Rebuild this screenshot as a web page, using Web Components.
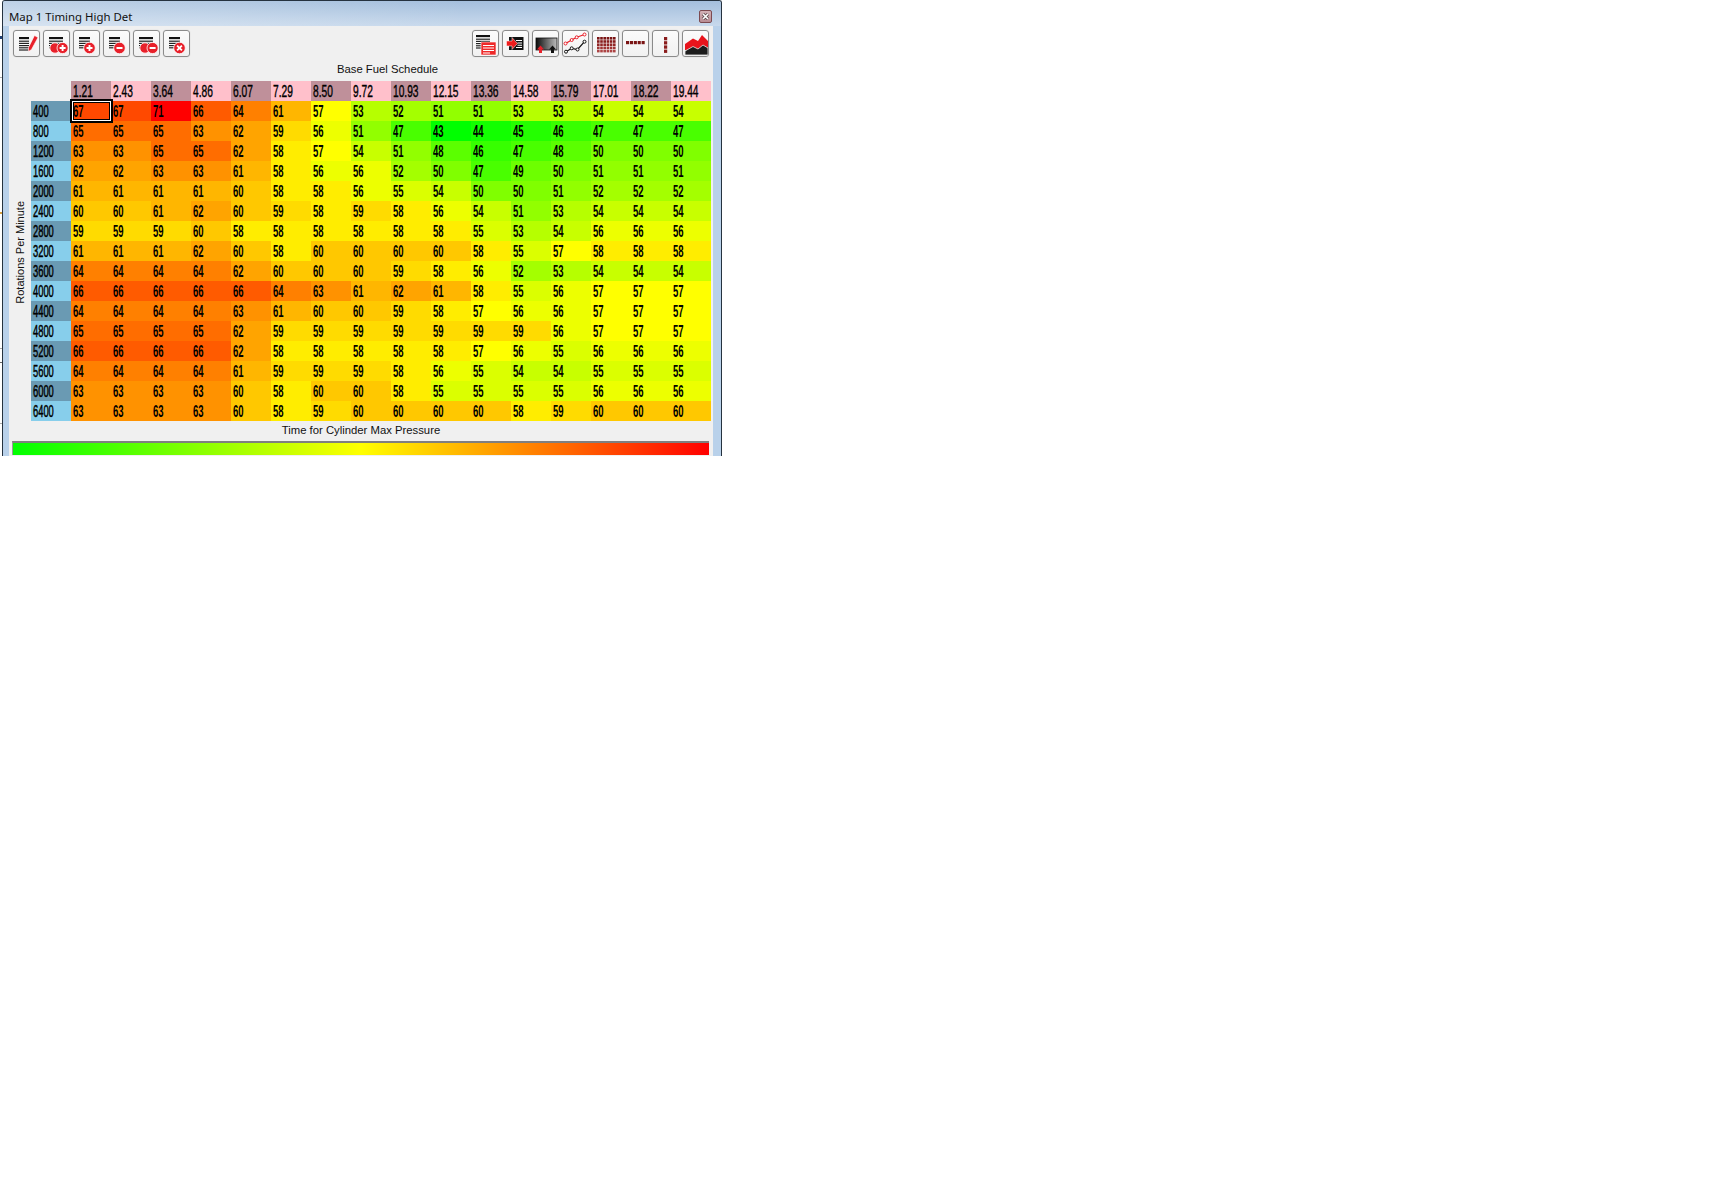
<!DOCTYPE html>
<html lang="en">
<head>
<meta charset="utf-8">
<title>Map 1 Timing High Det</title>
<style>
  html, body { margin: 0; background: #fff; }
  body {
    width: 1730px; height: 1192px; overflow: hidden; display: flex; align-items: flex-start;
    padding-left: 2px; box-sizing: border-box;
    font-family: "Liberation Sans", Arial, sans-serif;
    background:
      linear-gradient(180deg,
        #fff 0 36px, #1f3f74 36px 39px, #fff 39px 77px, #a9a9a9 77px 78px, #fff 78px 212px,
        #d8a040 212px 214px, #fff 214px 348px, #a9a9a9 348px 349px, #fff 349px 362px,
        #666 362px 363px, #fff 363px 423px, #a9a9a9 423px 424px, #fff 424px 456px, #fff 456px) 0 0 / 2px 100% no-repeat,
      #fff;
  }
</style>
</head>
<body>
<map-window>
  <span slot="title">Map 1 Timing High Det</span>
  <tool-bar slot="toolbar">
    <tool-button icon="edit"></tool-button>
    <tool-button icon="addmany"></tool-button>
    <tool-button icon="add"></tool-button>
    <tool-button icon="remove"></tool-button>
    <tool-button icon="removemany"></tool-button>
    <tool-button icon="delete"></tool-button>
    <span slot="right"><tool-button icon="copy"></tool-button></span>
    <span slot="right"><tool-button icon="import"></tool-button></span>
    <span slot="right"><tool-button icon="gradient"></tool-button></span>
    <span slot="right"><tool-button icon="lines"></tool-button></span>
    <span slot="right"><tool-button icon="grid"></tool-button></span>
    <span slot="right"><tool-button icon="row"></tool-button></span>
    <span slot="right"><tool-button icon="col"></tool-button></span>
    <span slot="right"><tool-button icon="area"></tool-button></span>
  </tool-bar>
  <heat-map slot="table" top-label="Base Fuel Schedule" side-label="Rotations Per Minute" bottom-label="Time for Cylinder Max Pressure"></heat-map>
  <scale-bar slot="scale"></scale-bar>
</map-window>

<script>
const doc = (x, y, w, h) => {
  let s = `<rect x="${x}" y="${y}" width="${w}" height="2.4" fill="#111"/>`;
  s += `<rect x="${x}" y="${y+2.4}" width="${w}" height="${h-2.4}" fill="#fff"/>`;
  for (let yy = y + 3.6; yy < y + h; yy += 2.2) s += `<rect x="${x}" y="${yy}" width="${w}" height="1.2" fill="#222"/>`;
  return s;
};
const badge = (cx, cy, r, inner) =>
  `<circle cx="${cx}" cy="${cy}" r="${r}" fill="#e8202a" stroke="#fff" stroke-width="0.8"/>${inner || ''}`;
const plus = (cx, cy) => `<path d="M${cx-3} ${cy}h6M${cx} ${cy-3}v6" stroke="#fff" stroke-width="1.9"/>`;
const minus = (cx, cy) => `<path d="M${cx-3} ${cy}h6" stroke="#fff" stroke-width="2"/>`;
const cross = (cx, cy) => `<path d="M${cx-2.4} ${cy-2.4}l4.8 4.8M${cx+2.4} ${cy-2.4}l-4.8 4.8" stroke="#fff" stroke-width="1.8"/>`;
const dots = (pts, stroke) => pts.map(p => `<circle cx="${p[0]}" cy="${p[1]}" r="1.5" fill="#fff" stroke="${stroke}" stroke-width="1"/>`).join('');
const poly = (pts, stroke) => `<polyline points="${pts.map(p => p.join(',')).join(' ')}" fill="none" stroke="${stroke}" stroke-width="1.2"/>` + dots(pts, stroke);

function gridIcon() {
  let s = '';
  for (let r = 0; r < 5; r++) for (let c = 0; c < 6; c++) {
    const shade = ['#7a1414', '#861a1a', '#922626', '#a03434', '#ad4444'][r];
    s += `<rect x="${4 + c * 3.2}" y="${6 + r * 3.2}" width="2.6" height="2.6" fill="${shade}"/>`;
  }
  return s;
}
const ICONS = {
  edit: doc(5, 6, 10, 13) + `<path d="M20.5 4.5 L24 6.5 L17.5 18.5 L14.5 20.5 L14.500 16.500 Z" fill="#e8202a" stroke="#fff" stroke-width=".6"/>`,
  addmany: doc(5, 6, 14, 12) + badge(11, 17, 5.2) + badge(18.6, 17, 5.6, plus(18.6, 17)),
  add: doc(5, 6, 11, 12) + badge(15.5, 17, 5.8, plus(15.5, 17)),
  remove: doc(5, 6, 11, 12) + badge(15.5, 17, 5.8, minus(15.5, 17)),
  removemany: doc(5, 6, 14, 12) + badge(11, 17, 5.2) + badge(18.6, 17, 5.6, minus(18.6, 17)),
  delete: doc(5, 6, 11, 12) + badge(15.5, 17, 5.8, cross(15.5, 17)),
  copy: doc(3, 4, 14, 14) +
    `<rect x="8" y="11" width="15" height="13" fill="#ee2a2a" stroke="#fff" stroke-width=".6"/>
     <path d="M10 14.5h11M10 17h11M10 19.5h11M10 22h7" stroke="#fff" stroke-width="1"/>`,
  import: `<rect x="6" y="6" width="14.5" height="13" fill="#111"/>
     <path d="M13 9.5h6M14.5 12h4.500M14.500 14.200h4.500M13 16.500h6" stroke="#fff" stroke-width="1.100"/>
     <path d="M3.500 10h5.500V6.500L14.500 12.500L9 18.500V15H3.500Z" fill="#ee1c1c" stroke="#fff" stroke-width=".5"/>`,
  gradient: `<defs><linearGradient id="g" x1="0" y1="0" x2="1" y2="0"><stop offset="0" stop-color="#0c0c0c"/><stop offset="1" stop-color="#bdbdbd"/></linearGradient></defs>
     <rect x="3" y="7" width="21" height="12" fill="url(#g)" stroke="#111" stroke-width=".8"/>
     <path d="M7.500 14.500L11 18.500H9V22H6V18.500H4Z" fill="#e8202a"/>
     <path d="M19.500 14.500L23 18.500H21V22H18V18.500H16Z" fill="#111"/>`,
  lines: poly([[2.5, 12.5], [8.7, 9], [13.7, 6.3], [21.5, 3.5]], '#e8202a') + poly([[3, 20.7], [8.7, 17.3], [14.5, 18.5], [21.5, 10.7]], '#111'),
  grid: gridIcon(),
  row: [0, 1, 2, 3, 4].map(i => `<rect x="${3 + i * 3.9}" y="10" width="3.100" height="3.200" fill="#7a1414"/>`).join(''),
  col: [0, 1, 2, 3].map(i => `<rect x="11" y="${6 + i * 4.2}" width="3.200" height="3.300" fill="#8a1c1c"/>`).join(''),
  area: `<path d="M2 13 L10 7.500 L15 10 L19 4 L25 10 V19 H2Z" fill="#e8141c"/>
     <path d="M2 20 L10 15.500 L15 18 L20 14 L25 17 V24 H2Z" fill="#1c1c1c" stroke="#e8e8e8" stroke-width=".8"/>`
};

class ToolButton extends HTMLElement {
  constructor() {
    super();
    this.attachShadow({ mode: 'open' }).innerHTML = `
      <style>
        :host { display: block; width: 27px; height: 27px; box-sizing: border-box;
                border: 1px solid #8b8b8b; border-radius: 3px;
                background: linear-gradient(#fbfbfb, #f1f1f1); box-shadow: 0 0 0 .5px #e4e4e4; }
        svg { display: block; width: 25px; height: 25px; }
      </style>
      <svg viewBox="0 0 25 25" aria-hidden="true">${ICONS[this.getAttribute('icon')] || ''}</svg>`;
  }
}
customElements.define('tool-button', ToolButton);

class ToolBar extends HTMLElement {
  constructor() {
    super();
    this.attachShadow({ mode: 'open' }).innerHTML = `
      <style>
        :host { display: flex; justify-content: space-between; padding: 4px 4px 0; }
        .g { display: flex; gap: 3px; }
        ::slotted(span) { display: block; }
      </style>
      <div class="g"><slot></slot></div>
      <div class="g"><slot name="right"></slot></div>`;
  }
}
customElements.define('tool-bar', ToolBar);

class MapWindow extends HTMLElement {
  constructor() {
    super();
    this.attachShadow({ mode: 'open' }).innerHTML = `
      <style>
        :host { display: block; width: 720px; height: 456px; box-sizing: border-box; overflow: hidden;
                border: 1px solid #25323f; border-bottom: 0; border-radius: 3px 3px 0 0; background: #b9d1ea; }
        .title { display: flex; align-items: center; justify-content: space-between; box-sizing: border-box;
                 height: 25px; padding: 6px 9px 0 6px;
                 background: linear-gradient(90deg, rgba(255,255,255,.28), rgba(255,255,255,0) 65%),
                             linear-gradient(180deg, #a4bfdd, #c8d9ec);
                 font: 11.4px/19px "Noto Sans", "Open Sans", sans-serif; color: #111; }
        .close { width: 13px; height: 13px; box-sizing: border-box; border: 1px solid #7c4a50; border-radius: 2px;
                 background: linear-gradient(#d2b1b6, #b98d94); display: flex; }
        .close svg { width: 11px; height: 11px; }
        .side { display: flex; padding: 0 7px 0 6px; }
        .body { width: 704px; height: 430px; background: #f0f0f0; display: flex; flex-direction: column; }
      </style>
      <div class="title"><slot name="title"></slot>
        <div class="close"><svg viewBox="0 0 11 11" aria-hidden="true"><path d="M3 3l5 5M8 3l-5 5" stroke="#4a3a3c" stroke-width="3"/><path d="M3 3l5 5M8 3l-5 5" stroke="#fff" stroke-width="1.700"/></svg></div>
      </div>
      <div class="side"><div class="body">
        <slot name="toolbar"></slot>
        <slot name="table"></slot>
        <slot name="scale"></slot>
      </div></div>`;
  }
}
customElements.define('map-window', MapWindow);

const COLS = ['1.21','2.43','3.64','4.86','6.07','7.29','8.50','9.72','10.93','12.15','13.36','14.58','15.79','17.01','18.22','19.44'];
const ROWS = [
 [400, 67,67,71,66,64,61,57,53,52,51,51,53,53,54,54,54],
 [800, 65,65,65,63,62,59,56,51,47,43,44,45,46,47,47,47],
 [1200,63,63,65,65,62,58,57,54,51,48,46,47,48,50,50,50],
 [1600,62,62,63,63,61,58,56,56,52,50,47,49,50,51,51,51],
 [2000,61,61,61,61,60,58,58,56,55,54,50,50,51,52,52,52],
 [2400,60,60,61,62,60,59,58,59,58,56,54,51,53,54,54,54],
 [2800,59,59,59,60,58,58,58,58,58,58,55,53,54,56,56,56],
 [3200,61,61,61,62,60,58,60,60,60,60,58,55,57,58,58,58],
 [3600,64,64,64,64,62,60,60,60,59,58,56,52,53,54,54,54],
 [4000,66,66,66,66,66,64,63,61,62,61,58,55,56,57,57,57],
 [4400,64,64,64,64,63,61,60,60,59,58,57,56,56,57,57,57],
 [4800,65,65,65,65,62,59,59,59,59,59,59,59,56,57,57,57],
 [5200,66,66,66,66,62,58,58,58,58,58,57,56,55,56,56,56],
 [5600,64,64,64,64,61,59,59,59,58,56,55,54,54,55,55,55],
 [6000,63,63,63,63,60,58,60,60,58,55,55,55,55,56,56,56],
 [6400,63,63,63,63,60,58,59,60,60,60,60,58,59,60,60,60]
];
function heat(v) {
  const lo = 43, mid = 57, hi = 71;
  if (v <= mid) return `rgb(${Math.round(255 * (v - lo) / (mid - lo))},255,0)`;
  return `rgb(255,${Math.round(255 * (hi - v) / (hi - mid))},0)`;
}

class HeatMap extends HTMLElement {
  constructor() {
    super();
    const cell = (cls, txt, style, extra) =>
      `<div class="c ${cls}"${style ? ` style="${style}"` : ''}><span>${txt}</span>${extra || ''}</div>`;
    let g = '<div class="corner"></div>';
    COLS.forEach((t, i) => g += cell('h' + (i % 2 ? '' : ' dk'), t));
    ROWS.forEach((r, ri) => {
      g += cell('r' + (ri % 2 ? '' : ' dk'), r[0]);
      r.slice(1).forEach((v, ci) => {
        const sel = ri === 0 && ci === 0 ? '<i class="sel"></i>' : '';
        g += cell('d', v, `background:${heat(v)}`, sel);
      });
    });
    this.attachShadow({ mode: 'open' }).innerHTML = `
      <style>
        :host { display: block; font: 11.3px/16px "Liberation Sans", Arial, sans-serif; color: #111; }
        .top { height: 24px; box-sizing: border-box; padding: 4px 0 0 53px; text-align: center; }
        .mid { display: flex; }
        .side { width: 22px; display: flex; align-items: center; justify-content: center; box-sizing: border-box; }
        .side span { writing-mode: vertical-rl; transform: rotate(180deg) translateY(-1px); white-space: nowrap; font-size: 11px; }
        .grid { display: grid; grid-template-columns: repeat(17, 40px); grid-auto-rows: 20px; }
        .c { position: relative; overflow: visible; box-sizing: border-box; padding: 1px 0 0 1.5px;
             font: 700 17px/20px "Liberation Sans", Arial, sans-serif; color: #000; white-space: nowrap; }
        .c span { display: inline-block; transform: scaleX(.56); transform-origin: 0 50%; }
        .h { background: #ffc0cb; font-weight: 400; -webkit-text-stroke: .4px #000; }
        .h span { transform: scaleX(.6); }
        .h.dk { background: #bf909a; }
        .r { background: #87ceeb; font-weight: 400; padding-left: 2px; -webkit-text-stroke: .5px #000; }
        .r span { transform: scaleX(.55); }
        .r.dk { background: #6a9ab3; }
        .sel { position: absolute; left: -1px; right: -2px; top: -2px; bottom: -2px; border: 2px solid #000;
               box-shadow: inset 0 0 0 1px #fff, inset 0 0 0 2px #000; z-index: 2; }
        .bottom { height: 20px; box-sizing: border-box; padding-top: 1px; text-align: center; }
      </style>
      <div class="top">${this.getAttribute('top-label')}</div>
      <div class="mid">
        <div class="side"><span>${this.getAttribute('side-label')}</span></div>
        <div class="grid">${g}</div>
      </div>
      <div class="bottom">${this.getAttribute('bottom-label')}</div>`;
  }
}
customElements.define('heat-map', HeatMap);

class ScaleBar extends HTMLElement {
  constructor() {
    super();
    this.attachShadow({ mode: 'open' }).innerHTML = `
      <style>
        :host { display: block; height: 13.500px; margin: 0 4px 0 3px; box-sizing: border-box;
                border-top: 2px solid #7f7f7f; border-left: 1px solid #9a9a9a;
                background: linear-gradient(90deg, #00ff00, #ffff00 50%, #ff0000); }
      </style>`;
  }
}
customElements.define('scale-bar', ScaleBar);
</script>
</body>
</html>
